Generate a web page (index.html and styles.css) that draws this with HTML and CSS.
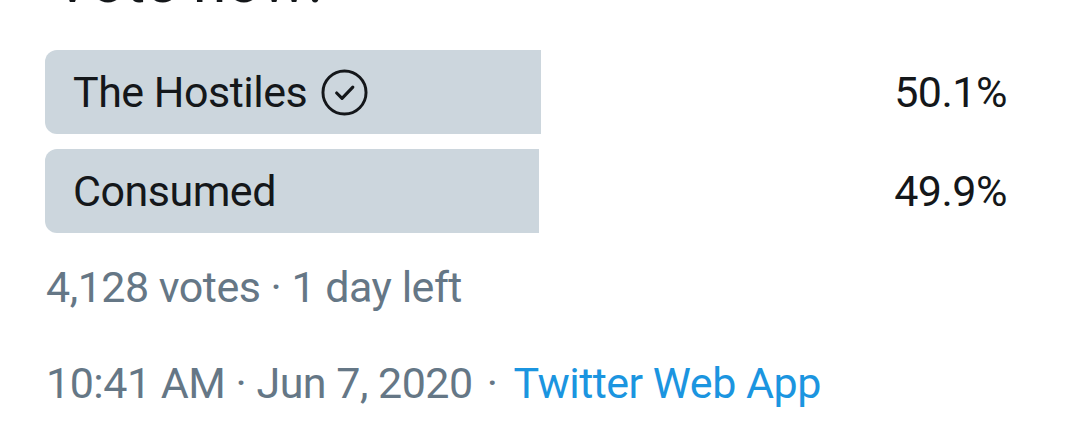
FILE: index.html
```html
<!DOCTYPE html>
<html lang="en">
<head>
<meta charset="utf-8">
<title>Poll</title>
<link rel="stylesheet" href="styles.css">
</head>
<body>
<article class="tweet">
  <div class="tweet-text"><p class="tweet-text-inner">Vote now!</p></div>
  <div class="poll">
    <div class="option">
      <div class="bar" style="width:496px"></div>
      <span class="label">The Hostiles
        <svg class="check" viewBox="0 0 48 48" aria-hidden="true"><circle cx="24" cy="24" r="22" fill="none" stroke="#14171a" stroke-width="3"/><path d="M16 24.5l5.5 5.5L32.5 18.5" fill="none" stroke="#14171a" stroke-width="3.2" stroke-linecap="round" stroke-linejoin="round"/></svg>
      </span>
      <span class="pct">50.1%</span>
    </div>
    <div class="option">
      <div class="bar" style="width:494px"></div>
      <span class="label">Consumed</span>
      <span class="pct">49.9%</span>
    </div>
  </div>
  <p class="poll-meta">4,128 votes · 1 day left</p>
  <p class="tweet-meta">10:41 AM · Jun 7, 2020<span class="sep">·</span><a class="source" href="#">Twitter Web App</a></p>
</article>
</body>
</html>
```

FILE: styles.css
```css
html, body {
  margin: 0;
  padding: 0;
  background: #ffffff;
}
body {
  font-family: Roboto, "Noto Sans", "Liberation Sans", sans-serif;
  color: #14171a;
  overflow: hidden;
}
.tweet {
  width: 961px;
  padding-left: 45px;
  padding-top: 0;
}
.tweet-text {
  height: 20px;
  overflow: hidden;
  padding-left: 8px;
}
.tweet-text-inner {
  margin: -50px 0 0 0;
  font-size: 61px;
  line-height: 62px;
}
.poll {
  margin-top: 30px;
  display: flex;
  flex-direction: column;
  gap: 15px;
}
.option {
  position: relative;
  height: 84px;
  display: flex;
  align-items: center;
  justify-content: space-between;
  font-size: 43px;
  letter-spacing: -0.5px;
}
.bar {
  position: absolute;
  left: 0;
  top: 0;
  bottom: 0;
  background: #ccd6dd;
  border-radius: 12px 0 0 12px;
}
.label {
  position: relative;
  padding-left: 28px;
  display: flex;
  align-items: center;
  gap: 14px;
}
.check {
  width: 47px;
  height: 47px;
}
.pct {
  position: relative;
  margin-right: -1px;
}
.poll-meta {
  margin: 29px 0 0 1px;
  font-size: 43px;
  letter-spacing: -0.5px;
  color: #657786;
}
.tweet-meta {
  margin: 46px 0 0 1px;
  font-size: 43px;
  letter-spacing: -0.5px;
  color: #657786;
}
.sep {
  padding: 0 16px 0 14px;
}
.source {
  color: #1b95e0;
  text-decoration: none;
}
```
